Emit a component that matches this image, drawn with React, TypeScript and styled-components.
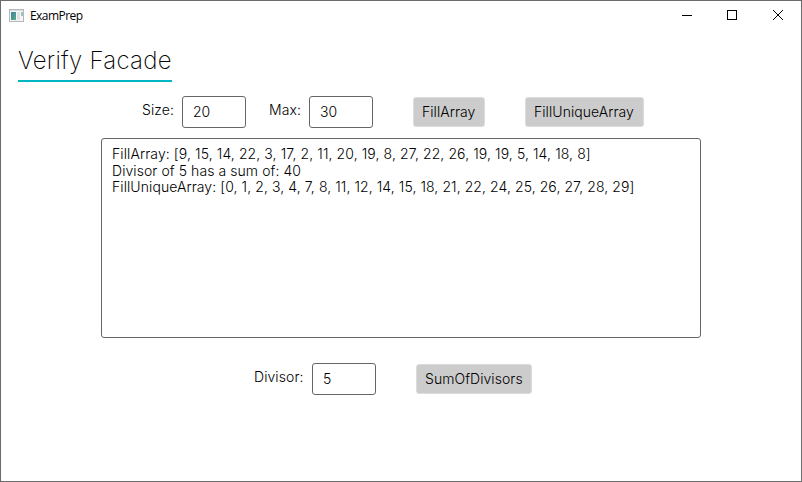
import React from "react";
import styled, { createGlobalStyle } from "styled-components";

const Global = createGlobalStyle`
  *{box-sizing:border-box}
  body{margin:0;background:#fff;overflow:hidden;font-family:Inter,sans-serif;color:#000}
`;
const Window = styled.div`
  width:802px;height:482px;border:1px solid #6b6b6b;background:#fff;display:flex;flex-direction:column;
`;
const TitleBar = styled.header`
  height:29px;display:flex;align-items:center;padding-left:8px;font:12px "Open Sans",sans-serif;
`;
const Caption = styled.span`margin-left:5px;flex:1;letter-spacing:-0.55px;`;
const Control = styled.span`
  width:46px;height:29px;display:flex;align-items:center;justify-content:center;
`;
const Tab = styled.h1`
  margin:15px 0 0 17px;height:37px;width:154px;border-bottom:2px solid #00b7c3;
  font-weight:200;font-size:24px;line-height:31px;letter-spacing:.26px;white-space:nowrap;
`;
const Row = styled.div<{ $top: number; $left: number }>`
  display:flex;height:32px;margin-top:${p => p.$top}px;padding-left:${p => p.$left}px;font-size:14px;font-weight:300;
`;
const Label = styled.label<{ $w: number }>`
  width:${p => p.$w}px;line-height:28px;letter-spacing:.08px;white-space:nowrap;
`;
const Field = styled.input<{ $gap: number }>`
  width:64px;height:32px;border:1px solid #666;border-radius:3px;padding:0 10px 1px;
  font:300 14px Inter,sans-serif;color:#000;margin-right:${p => p.$gap}px;outline:none;
`;
const Button = styled.button<{ $w: number; $gap?: number }>`
  width:${p => p.$w}px;height:30px;margin:1px ${p => p.$gap || 0}px 0 0;
  border:1px solid #dcdcdc;border-radius:3px;background:#ccc;font:300 14px Inter,sans-serif;
  letter-spacing:.06px;padding:0 0 1px 8px;text-align:left;white-space:nowrap;color:#000;
`;
const Output = styled.div`
  margin:10px 0 0 100px;width:600px;height:200px;border:1px solid #666;border-radius:3px;
  padding:7px 10px;font:300 14px/16.5px Inter,sans-serif;
`;
const Line = styled.div<{ $track: number }>`
  white-space:pre;letter-spacing:${p => p.$track}px;
`;

const lines = [
  { text: "FillArray: [9, 15, 14, 22, 3, 17, 2, 11, 20, 19, 8, 27, 22, 26, 19, 19, 5, 14, 18, 8]", track: 0.095 },
  { text: "Divisor of 5 has a sum of: 40", track: 0.07 },
  { text: "FillUniqueArray: [0, 1, 2, 3, 4, 7, 8, 11, 12, 14, 15, 18, 21, 22, 24, 25, 26, 27, 28, 29]", track: 0.077 },
];

export default function App() {
  return (
    <>
      <Global />
      <Window>
        <TitleBar>
          <svg width="16" height="14">
            <defs>
              <linearGradient id="pane" x1="0" y1="0" x2="1" y2="1">
                <stop offset="0" stopColor="#437fa8" />
                <stop offset="1" stopColor="#58ae7c" />
              </linearGradient>
            </defs>
            <rect x=".5" y=".5" width="14" height="12" fill="#f4f5f6" stroke="#b4b8bd" />
            <path d="M1 1.5H14" stroke="#d8dde2" />
            <rect x="2" y="3" width="5" height="8" fill="url(#pane)" />
            <rect x="8" y="3" width="3" height="8" fill="#e0e4e7" />
            <rect x="12" y="3" width="2" height="4" fill="#9cc4b4" />
          </svg>
          <Caption>ExamPrep</Caption>
          <Control><svg width="11" height="11"><path d="M1 5.5H11" stroke="#000" /></svg></Control>
          <Control><svg width="11" height="11"><rect x=".5" y=".5" width="9" height="9" fill="none" stroke="#000" /></svg></Control>
          <Control><svg width="11" height="11"><path d="M0 0L10 10M10 0L0 10" stroke="#000" /></svg></Control>
        </TitleBar>
        <Tab>Verify Facade</Tab>
        <Row $top={14} $left={141}>
          <Label $w={40}>Size:</Label><Field $gap={23} defaultValue="20" />
          <Label $w={40}>Max:</Label><Field $gap={40} defaultValue="30" />
          <Button $w={72} $gap={40}>FillArray</Button>
          <Button $w={119}>FillUniqueArray</Button>
        </Row>
        <Output>
          {lines.map(l => <Line key={l.text} $track={l.track}>{l.text}</Line>)}
        </Output>
        <Row $top={25} $left={253}>
          <Label $w={58}>Divisor:</Label><Field $gap={40} defaultValue="5" />
          <Button $w={116}>SumOfDivisors</Button>
        </Row>
      </Window>
    </>
  );
}
